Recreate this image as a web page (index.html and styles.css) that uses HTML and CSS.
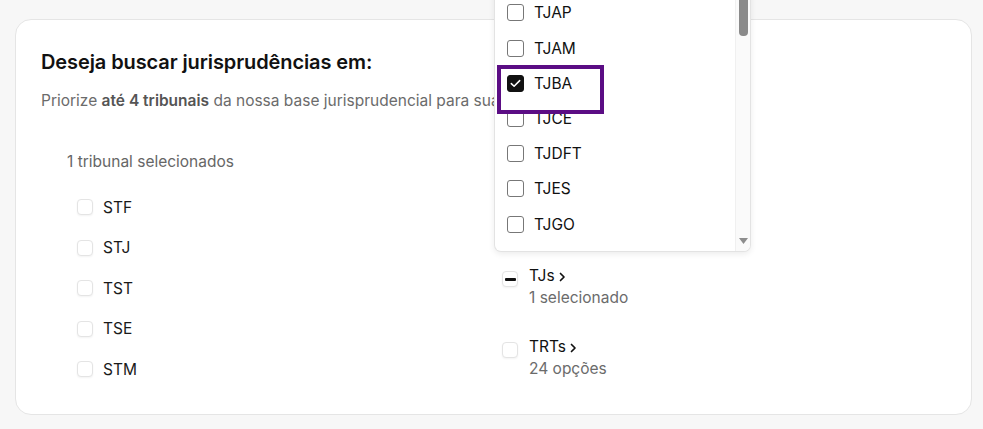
FILE: index.html
```html
<!DOCTYPE html>
<html lang="pt-BR">
<head>
<meta charset="utf-8">
<title>Tribunais</title>
<link rel="stylesheet" href="styles.css">
</head>
<body>
<div class="card">
  <h2 class="title">Deseja buscar jurisprudências em:</h2>
  <p class="subtitle">Priorize <b>até 4 tribunais</b> da nossa base jurisprudencial para sua</p>
  <div class="grid">
    <div class="col">
      <div class="count">1 tribunal selecionados</div>
      <ul class="list">
        <li class="item"><span class="box"></span>STF</li>
        <li class="item"><span class="box"></span>STJ</li>
        <li class="item"><span class="box"></span>TST</li>
        <li class="item"><span class="box"></span>TSE</li>
        <li class="item"><span class="box"></span>STM</li>
      </ul>
    </div>
    <div class="col col-right">
      <div class="group">
        <span class="box box-ind"><span class="dash"></span></span>
        <div class="group-text">
          <div class="group-name">TJs <svg class="chev" width="7" height="10" viewBox="0 0 7 10"><path d="M1.5 1.5 L5 5 L1.5 8.5" fill="none" stroke="#111" stroke-width="1.7" stroke-linecap="round" stroke-linejoin="round"/></svg></div>
          <div class="group-sub">1 selecionado</div>
        </div>
      </div>
      <div class="group">
        <span class="box"></span>
        <div class="group-text">
          <div class="group-name">TRTs <svg class="chev" width="7" height="10" viewBox="0 0 7 10"><path d="M1.5 1.5 L5 5 L1.5 8.5" fill="none" stroke="#111" stroke-width="1.7" stroke-linecap="round" stroke-linejoin="round"/></svg></div>
          <div class="group-sub">24 opções</div>
        </div>
      </div>

      <div class="dropdown">
        <ul class="dd-list">
          <li class="dd-item"><span class="dd-box"></span>TJAP</li>
          <li class="dd-item"><span class="dd-box"></span>TJAM</li>
          <li class="dd-item dd-hl"><span class="dd-box dd-checked"><svg width="11" height="9" viewBox="0 0 11 9"><path d="M1.3 4.6 L4.1 7.3 L9.7 1.6" fill="none" stroke="#fff" stroke-width="1.5" stroke-linecap="round" stroke-linejoin="round"/></svg></span>TJBA</li>
          <li class="dd-item"><span class="dd-box"></span>TJCE</li>
          <li class="dd-item"><span class="dd-box"></span>TJDFT</li>
          <li class="dd-item"><span class="dd-box"></span>TJES</li>
          <li class="dd-item"><span class="dd-box"></span>TJGO</li>
        </ul>
        <div class="scrollbar">
          <div class="thumb"></div>
          <svg class="arrow" width="9" height="6" viewBox="0 0 9 6"><path d="M0 0 H9 L4.5 6 Z" fill="#8d8d8d"/></svg>
        </div>
      </div>
    </div>
  </div>
</div>
</body>
</html>
```

FILE: styles.css
```css
* { box-sizing: border-box; }
html, body { margin: 0; padding: 0; }
body {
  background: #f7f7f7;
  font-family: Inter, "Noto Sans", sans-serif;
  color: #111;
  padding: 19px 11px 0 15px;
  height: 429px;
  overflow: hidden;
}
.card {
  position: relative;
  height: 396px;
  background: #fff;
  border: 1px solid #e5e5e5;
  border-radius: 16px;
  padding: 28px 52px 0 25px;
}
.title {
  margin: 0;
  font-size: 20px;
  font-weight: 600;
  line-height: 28px;
  color: #111;
  letter-spacing: -0.1px;
}
.subtitle {
  margin: 14px 0 0;
  font-size: 15.5px;
  line-height: 22px;
  color: #6b6b6b;
  white-space: nowrap;
}
.subtitle b { color: #555; font-weight: 600; }
.grid {
  display: grid;
  grid-template-columns: 1fr 1fr;
  margin-left: 26px;
  margin-top: 39px;
}
.col { position: relative; }
.count {
  font-size: 15.5px;
  line-height: 22px;
  color: #666;
}
.list {
  list-style: none;
  margin: 14px 0 0;
  padding: 0 0 0 10px;
}
.item {
  display: flex;
  align-items: center;
  height: 40.5px;
  font-size: 15.5px;
  color: #1a1a1a;
  gap: 10px;
}
.box {
  width: 16px;
  height: 16px;
  flex: none;
  border: 1px solid #e4e4e4;
  border-radius: 4px;
  background: #fff;
  box-shadow: 0 1px 2px rgba(0,0,0,0.05);
  display: inline-flex;
  align-items: center;
  justify-content: center;
}
.dash {
  width: 11px;
  height: 3px;
  background: #111;
  border-radius: 1px;
}
.col-right {
  padding-top: 114px;
  padding-left: 9px;
}
.group {
  display: flex;
  gap: 11px;
  align-items: flex-start;
  height: 71px;
}
.group .box { margin-top: 6px; }
.group-name {
  font-size: 15.5px;
  line-height: 22px;
  color: #111;
  display: flex;
  align-items: center;
  gap: 4px;
}
.chev { margin-top: 1px; }
.group-sub {
  font-size: 15.5px;
  line-height: 22px;
  color: #6b6b6b;
}
.dropdown {
  position: absolute;
  left: 1px;
  top: -171px;
  width: 257px;
  height: 272px;
  background: #fff;
  border: 1px solid #e3e3e3;
  border-top: none;
  border-radius: 0 0 7px 7px;
  box-shadow: 0 2px 6px rgba(0,0,0,0.08);
  overflow: hidden;
}
.dd-list {
  list-style: none;
  margin: 0;
  padding: 0;
  position: absolute;
  left: 0;
  right: 0;
  top: 15.4px;
}
.dd-item {
  display: flex;
  align-items: center;
  height: 35.2px;
  padding-left: 12px;
  gap: 10px;
  font-size: 15.5px;
  color: #111;
}
.dd-box {
  width: 17px;
  height: 17px;
  flex: none;
  border: 1px solid #777;
  border-radius: 3px;
  background: #fff;
  display: inline-flex;
  align-items: center;
  justify-content: center;
}
.dd-checked {
  background: #111;
  border-color: #111;
}
.dd-hl { position: relative; }
.dd-hl::after {
  content: "";
  position: absolute;
  left: 2px;
  top: -1px;
  width: 99px;
  height: 41px;
  border: 4px solid #5b0d84;
}
.scrollbar {
  position: absolute;
  right: 0;
  top: 0;
  bottom: 0;
  width: 15px;
  background: #fafafa;
  border-left: 1px solid #f0f0f0;
}
.thumb {
  position: absolute;
  left: 3px;
  top: 0;
  width: 9px;
  height: 56px;
  background: #8a8a8a;
  border-radius: 0 0 4px 4px;
}
.arrow {
  position: absolute;
  left: 3px;
  bottom: 7px;
}
```
